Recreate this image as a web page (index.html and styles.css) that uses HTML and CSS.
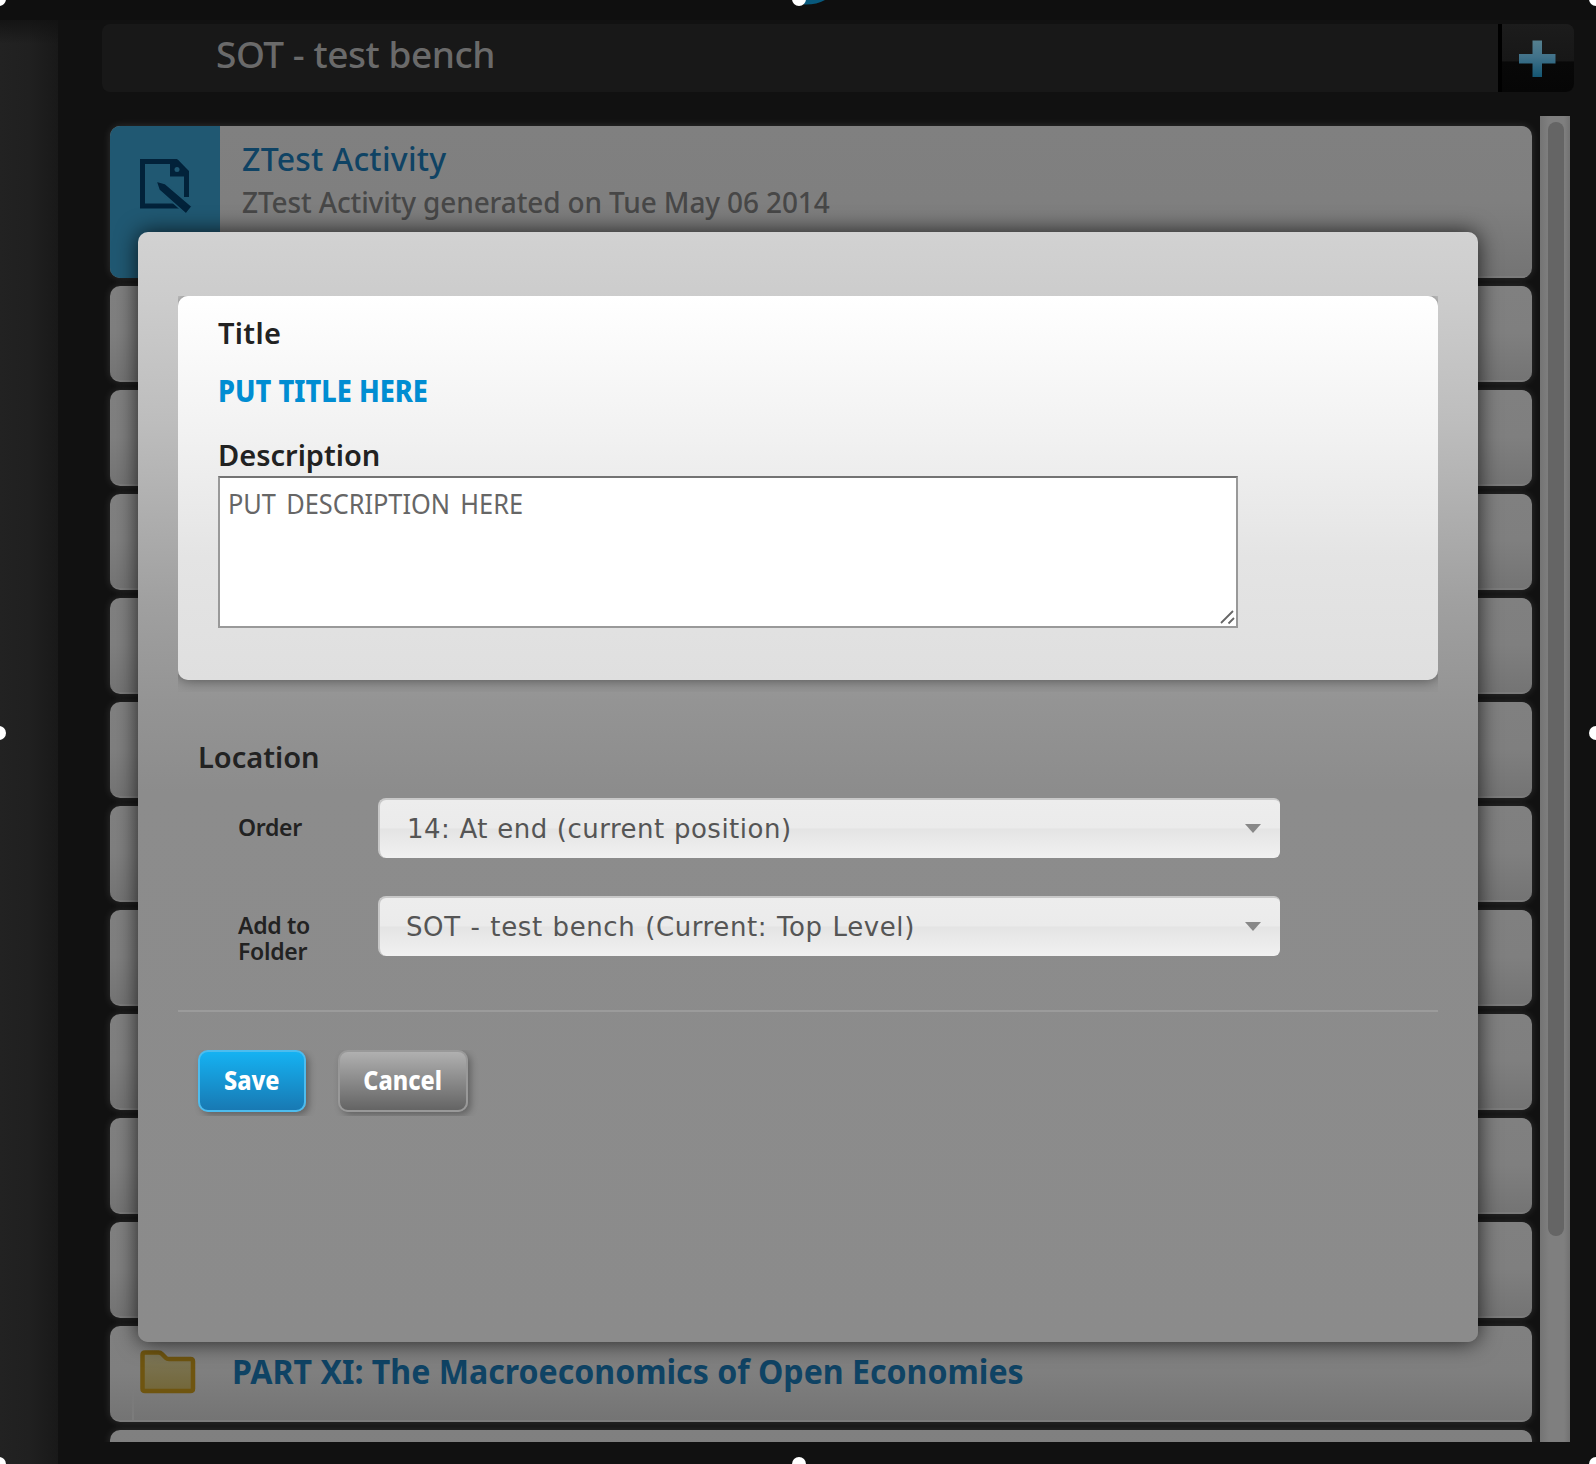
FILE: index.html
```
<!DOCTYPE html>
<html lang="en">
<head>
<meta charset="utf-8">
<title>SOT - test bench</title>
<link rel="stylesheet" href="styles.css">
</head>
<body>
<div class="app">
  <div class="topbar"></div>
  <div class="workspace">
    <aside class="sidebar"></aside>
    <main class="content">
      <header class="header">
        <h1 class="header-title"><span>SOT - test bench</span></h1>
        <button class="add" aria-label="Add">
          <svg width="40" height="40" viewBox="0 0 40 40">
            <defs><linearGradient id="plus" x1="0" y1="0" x2="0" y2="1"><stop offset="0" stop-color="#55808f"/><stop offset=".45" stop-color="#41728a"/><stop offset="1" stop-color="#145672"/></linearGradient></defs>
            <path fill="url(#plus)" d="M15.500 2.500h9.500v13.500h13.500v9.500h-13.500v13.500h-9.500v-13.500h-13.500v-9.500h13.500z"/>
          </svg>
        </button>
      </header>
      <div class="list-area">
        <div class="list">
          <article class="card activity">
            <div class="tile">
              <svg width="54" height="56" viewBox="0 0 54 56">
                <path d="M42 49H4.500V4.500H38L48.500 15v25" fill="none" stroke="#02223a" stroke-width="5"/>
                <path d="M32 3h8l10 11v5.500H32z" fill="#02223a"/>
                <circle cx="39" cy="12.500" r="2.500" fill="#205872"/>
                <path d="M18 24l9 2.500 27 23-6 7.500-27-24z" fill="#02223a" stroke="#205872" stroke-width="1.500"/>
              </svg>
            </div>
            <div class="activity-text">
              <h2><span>ZTest Activity</span></h2>
              <p><span>ZTest Activity generated on Tue May 06 2014</span></p>
            </div>
          </article>
          <article class="card"></article>
          <article class="card"></article>
          <article class="card"></article>
          <article class="card"></article>
          <article class="card"></article>
          <article class="card"></article>
          <article class="card"></article>
          <article class="card"></article>
          <article class="card"></article>
          <article class="card"></article>
          <article class="card folder">
            <svg class="folder-icon" width="58" height="46" viewBox="0 0 58 46">
              <defs><linearGradient id="fold" x1="0" y1="0" x2="0" y2="1"><stop offset="0" stop-color="#7c7659"/><stop offset="1" stop-color="#736739"/></linearGradient></defs>
              <path d="M6 3.500H19.500Q21.500 3.500 23 5L27 9Q28 10 30 10H51.500Q54 10 54 12.500V39.500Q54 42 51.500 42H6Q3.500 42 3.500 39.500V6Q3.500 3.500 6 3.500Z" fill="url(#fold)" stroke="#6f5510" stroke-width="4.500"/>
            </svg>
            <h2><span>PART XI: The Macroeconomics of Open Economies</span></h2>
          </article>
          <article class="card"></article>
        </div>
        <div class="track"><div class="thumb"></div></div>
      </div>
    </main>
  </div>
</div>

<section class="modal" role="dialog">
  <div class="panel-clip">
    <div class="panel">
      <h3 class="label-title"><span>Title</span></h3>
      <div class="title-value"><span>PUT TITLE HERE</span></div>
      <h3 class="label-desc"><span>Description</span></h3>
      <div class="textarea"><span>PUT DESCRIPTION HERE</span>
        <svg class="grip" width="16" height="16" viewBox="0 0 16 16"><path d="M2 14L14 2M9.500 14.500L15 9" stroke="#666" stroke-width="1.800" fill="none"/></svg>
      </div>
    </div>
  </div>
  <h3 class="location"><span>Location</span></h3>
  <div class="row">
    <div class="row-label">Order</div>
    <div class="select"><span class="s-order">14: At end (current position)</span><i class="caret"></i></div>
  </div>
  <div class="row">
    <div class="row-label">Add to<br>Folder</div>
    <div class="select"><span class="s-folder">SOT - test bench (Current: Top Level)</span><i class="caret"></i></div>
  </div>
  <div class="rule"></div>
  <div class="actions">
    <button class="btn save"><span>Save</span></button>
    <button class="btn cancel"><span>Cancel</span></button>
  </div>
</section>

<svg class="badge-edge" width="28" height="6" viewBox="0 0 28 6"><path d="M0 0H23Q14 5 2 4.500z" fill="#08597c"/></svg>
<i class="handle tl"></i><i class="handle tc"></i><i class="handle tr"></i>
<i class="handle ml"></i><i class="handle mr"></i>
<i class="handle bl"></i><i class="handle bc"></i><i class="handle br"></i>
</body>
</html>
```
FILE: styles.css
```
* { box-sizing: border-box; }
html, body { margin: 0; height: 100%; overflow: hidden; background: #111; }
body { position: relative; width: 1596px; height: 1464px; font-family: "Noto Sans", "Open Sans", sans-serif; }
h1, h2, h3, p { margin: 0; white-space: nowrap; }
button { font-family: inherit; padding: 0; margin: 0; border: 0; }
svg { display: block; }

.app { display: flex; flex-direction: column; height: 1464px; }
.topbar { height: 20px; background: #0f0f0f; flex: none; }
.workspace { display: flex; flex: 1; min-height: 0; }
.sidebar { width: 58px; flex: none; background: linear-gradient(180deg, rgba(17,17,17,.8), rgba(17,17,17,0) 24px), linear-gradient(90deg, #222 0, #202020 50%, #191919 100%); }
.content { flex: 1; padding: 4px 22px 22px 44px; display: flex; flex-direction: column; min-width: 0; }

.header { display: flex; height: 68px; flex: none; border-radius: 8px; overflow: hidden; background: #181818; }
.header-title { flex: 1; padding-left: 114px; font-size: 37px; line-height: 60px; font-weight: 500; color: #6a6a6a; letter-spacing: -.45px; }
.add { width: 76px; border-left: 4px solid #000; background: linear-gradient(180deg, #1c1c1c 0, #171717 54%, #080808 56%, #060606 100%); display: flex; align-items: center; justify-content: center; }
.add svg { margin-left: -3px; }

.list-area { flex: 1; min-height: 0; margin-top: 24px; padding-right: 4px; display: flex; }
.list { width: 1438px; height: 1326px; padding: 10px 8px 0; overflow: hidden; display: flex; flex-direction: column; gap: 8px; }
.card { flex: none; height: 96px; border-radius: 10px; border-bottom: 2px solid #7c7c7c; background: linear-gradient(180deg, #808080 0, #7f7f7f 50%, #747474 100%); box-shadow: 0 0 9px rgba(255,255,255,.13); }
.activity { height: 152px; display: flex; overflow: hidden; border-bottom: 0; }
.tile { width: 110px; height: 152px; flex: none; background: #205872; padding: 31px 0 0 28px; }
.activity-text { flex: 1; height: 152px; padding: 13px 0 0 22px; border-bottom: 2px solid #7c7c7c; }
.activity h2 { font-size: 32px; line-height: 40px; font-weight: 500; letter-spacing: .26px; color: #0f4364; }
.activity p { margin-top: 5px; font-size: 28px; line-height: 36px; font-weight: 500; letter-spacing: -.13px; color: #474747; }
.folder { display: flex; background: linear-gradient(180deg, transparent 50px, #7c7c7c 90px) 22px 0 / 2px 100% no-repeat, linear-gradient(180deg, #808080 0, #7f7f7f 50%, #747474 100%); }
.folder-icon { flex: none; margin: 23px 0 0 29px; }
.folder h2 { margin: 20px 0 0 35px; font-size: 34px; line-height: 51px; font-weight: 700; color: #0f4364; }
.folder h2 span { display: inline-block; transform: scaleX(.944); transform-origin: 0 50%; }
.track { width: 30px; height: 1326px; margin-left: auto; padding: 6px 6px 0 8px; background: linear-gradient(90deg, #747474, #7f7f7f 30%, #7f7f7f 80%, #727272); }
.thumb { height: 1114px; border-radius: 8px; background: #656565; }

.modal { position: absolute; left: 138px; top: 232px; width: 1340px; height: 1110px; border-radius: 10px; padding: 64px 40px 0; background: linear-gradient(180deg, #d2d2d2 0, #cccccc 68px, #bdbdbd 190px, #a0a0a0 370px, #949494 470px, #8c8c8c 560px, #8b8b8b 100%); box-shadow: 0 0 22px rgba(0,0,0,.75); color: #222; }
.panel-clip { height: 396px; overflow: hidden; }
.panel { height: 384px; border-radius: 10px; padding: 17px 40px 0; background: linear-gradient(180deg, #fff 0, #f2f2f2 35%, #e4e4e4 68%, #dfdfdf 100%); box-shadow: 0 0 14px rgba(0,0,0,.5); }
.panel h3 { font-size: 29px; line-height: 40px; font-weight: 600; }
.panel .label-title span { letter-spacing: .3px; }
.title-value { margin-top: 18px; font-size: 30px; line-height: 40px; font-weight: 800; color: #008dd2; white-space: nowrap; }
.title-value span { display: inline-block; transform: scaleX(.905); transform-origin: 0 50%; }
.panel .label-desc { margin-top: 24px; }
.textarea { position: relative; width: 1020px; height: 152px; margin-top: 1px; padding: 7px 7px 7px 8px; border: 2px solid #999; border-top-color: #737373; background: #fff; font-size: 28px; line-height: 36px; color: #666; }
.textarea span { display: inline-block; word-spacing: 4px; transform: scaleX(.905); transform-origin: 0 50%; }
.grip { position: absolute; right: 1px; bottom: 1px; }
.location { margin: 45px 0 0 20px; font-size: 29px; line-height: 40px; font-weight: 600; }
.row { display: flex; height: 60px; margin-top: 21px; padding-left: 60px; }
.row + .row { margin-top: 38px; }
.row-label { width: 140px; padding-top: 16px; font-size: 23px; line-height: 26px; font-weight: 600; letter-spacing: -.3px; white-space: nowrap; }
.select { display: flex; align-items: center; width: 902px; height: 60px; padding: 0 19px 0 27px; border: 2px solid #c8c8c8; border-right-width: 0; border-bottom-width: 0; border-radius: 8px 6px 6px 8px; background: linear-gradient(180deg, #ededed 0, #ebebeb 48%, #e4e4e4 50%, #f1f1f1 100%); font-family: "DejaVu Sans", sans-serif; font-size: 26px; line-height: 58px; color: #555; white-space: nowrap; }
.s-order { letter-spacing: .5px; word-spacing: .4px; }
.s-folder { letter-spacing: .6px; word-spacing: 1px; margin-left: -1px; }
.caret { margin: 0 0 2px auto; border: 8px solid transparent; border-top: 9px solid #888; border-bottom: 0; }
.rule { height: 2px; margin-top: 54px; background: #9b9b9b; }
.actions { display: flex; gap: 32px; height: 66px; margin: 38px 0 0; padding-left: 20px; overflow: hidden; }
.btn { height: 62px; border: 2px solid #4dbcee; border-radius: 10px; box-shadow: 3px 3px 7px rgba(0,0,0,.3); font-size: 26px; line-height: 57px; font-weight: 800; color: #fff; display: flex; justify-content: center; }
.btn span { display: inline-block; transform: scaleX(.9); }
.save { width: 108px; background: linear-gradient(180deg, #15b2f2, #1879b3); }
.cancel { width: 130px; border-color: #999; background: linear-gradient(180deg, #b0b0b0, #646464); }

.badge-edge { position: absolute; left: 802px; top: 0; }
.handle { position: absolute; width: 14px; height: 14px; border-radius: 50%; background: #fff; }
.tl { left: -8px; top: -8px; } .tc { left: 792px; top: -8px; } .tr { left: 1589px; top: -8px; }
.ml { left: -8px; top: 726px; } .mr { left: 1589px; top: 726px; }
.bl { left: -8px; top: 1457px; } .bc { left: 792px; top: 1457px; } .br { left: 1589px; top: 1457px; }
```
